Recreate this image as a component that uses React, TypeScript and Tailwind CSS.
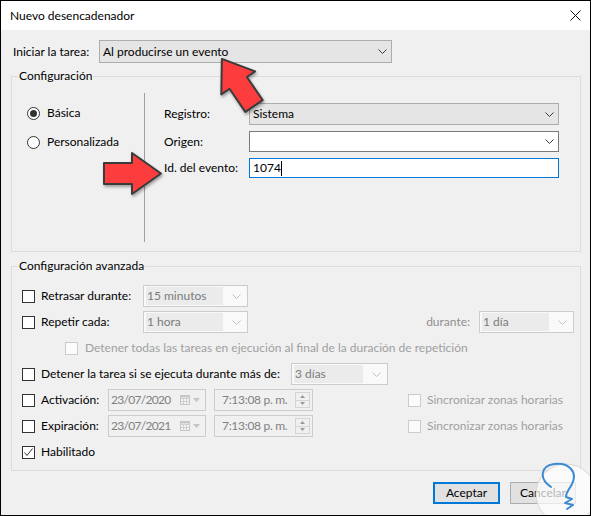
import React from "react";

function Chevron({ color = "#3c3c3c" }: { color?: string }) {
  return (
    <svg width="9" height="5" viewBox="0 0 9 5" className="shrink-0">
      <path d="M0.5 0.5 L4.5 4.5 L8.5 0.5" fill="none" stroke={color} strokeWidth="1" />
    </svg>
  );
}

function Check({ checked = false, disabled = false }: { checked?: boolean; disabled?: boolean }) {
  return (
    <span
      className={
        disabled
          ? "w-[13px] h-[13px] shrink-0 border border-[#cccccc] bg-[#fbfbfb] flex items-center justify-center"
          : "w-[13px] h-[13px] shrink-0 border border-[#333333] bg-white flex items-center justify-center"
      }
    >
      {checked && (
        <svg width="11" height="11" viewBox="0 0 11 11">
          <path d="M1.5 5.5 L4 8.5 L9.5 1.5" fill="none" stroke="#333333" strokeWidth="1" />
        </svg>
      )}
    </span>
  );
}

function Radio({ checked = false }: { checked?: boolean }) {
  return (
    <span className="w-[13px] h-[13px] shrink-0 rounded-full border border-[#333333] bg-white flex items-center justify-center">
      {checked && <span className="w-[7px] h-[7px] rounded-full bg-[#333333]" />}
    </span>
  );
}

function DisCombo({ text, className }: { text: string; className: string }) {
  return (
    <div className={"h-[22px] border border-[#cccccc] bg-[#f9f9f9] flex items-center pl-[2px] pr-[6px] shrink-0 " + className}>
      <span className="flex-1 h-[18px] bg-[#ebebeb] text-[#7a7a7a] leading-[18px] pl-[1px] whitespace-nowrap overflow-hidden">
        {text}
      </span>
      <span className="w-[14px] flex justify-end ml-[4px]">
        <Chevron color="#c2c2c2" />
      </span>
    </div>
  );
}

function DatePick({ text }: { text: string }) {
  return (
    <div className="w-[98px] h-[22px] border border-[#cccccc] flex items-center pl-[2px] pr-[5px] text-[#808080] shrink-0">
      <span className="flex-1 whitespace-nowrap tracking-[-0.7px]">{text}</span>
      <svg width="10" height="10" viewBox="0 0 10 10" className="shrink-0">
        <rect x="0.5" y="0.5" width="9" height="9" fill="#f4f4f4" stroke="#c4c4c4" />
        <path d="M0.5 3.5 H9.5 M0.5 6.5 H9.5 M3.5 3 V9.5 M6.5 3 V9.5" stroke="#d0d0d0" strokeWidth="1" />
        <rect x="0.5" y="0.5" width="9" height="2" fill="#c8c8c8" />
      </svg>
      <svg width="7" height="4" viewBox="0 0 7 4" className="shrink-0 ml-[3px]">
        <path d="M0 0 H7 L3.5 4 Z" fill="#c4c4c4" />
      </svg>
    </div>
  );
}

function TimePick() {
  return (
    <div className="w-[99px] h-[22px] border border-[#cccccc] flex items-center pl-[7px] pr-[2px] text-[#808080] shrink-0">
      <span className="flex-1 whitespace-nowrap tracking-[-0.3px]">7:13:08 p. m.</span>
      <div className="flex flex-col w-[15px] h-[16px]">
        <span className="flex-1 border border-[#d4d4d4] flex items-center justify-center">
          <svg width="5" height="3" viewBox="0 0 5 3">
            <path d="M0 3 H5 L2.5 0 Z" fill="#9a9a9a" />
          </svg>
        </span>
        <span className="flex-1 border border-t-0 border-[#d4d4d4] flex items-center justify-center">
          <svg width="5" height="3" viewBox="0 0 5 3">
            <path d="M0 0 H5 L2.5 3 Z" fill="#9a9a9a" />
          </svg>
        </span>
      </div>
    </div>
  );
}

function Arrow({ x, y, angle }: { x: number; y: number; angle: number }) {
  return (
    <g transform={`translate(${x} ${y}) rotate(${angle})`}>
      <polygon
        points="0,-10.5 28,-10.5 28,-20.5 57,0 28,20.5 28,10.5 0,10.5"
        fill="#fd3d3d"
        stroke="#3a3a3a"
        strokeWidth="2"
        strokeLinejoin="round"
      />
    </g>
  );
}

export default function App() {
  return (
    <div className="relative w-[591px] h-[516px] border border-black bg-[#f0f0f0] overflow-hidden text-[12px] leading-[16px] text-black font-['Segoe_UI','Lato',sans-serif]">
      {/* Title bar */}
      <div className="h-[29px] bg-white flex items-center justify-between pl-[9px] pr-[9px]">
        <span className="whitespace-nowrap">Nuevo desencadenador</span>
        <svg width="11" height="11" viewBox="0 0 11 11">
          <path d="M0.5 0.5 L10.5 10.5 M10.5 0.5 L0.5 10.5" stroke="#111111" strokeWidth="1" />
        </svg>
      </div>

      {/* Iniciar la tarea */}
      <div className="flex items-center mt-[10px] pl-[12px] h-[23px]">
        <span className="w-[86px] shrink-0 whitespace-nowrap">Iniciar la tarea:</span>
        <div className="w-[293px] h-[23px] border border-[#adadad] bg-[#e5e5e5] flex items-center justify-between pl-[3px] pr-[4px]">
          <span className="whitespace-nowrap">Al producirse un evento</span>
          <Chevron />
        </div>
      </div>

      {/* Configuración */}
      <fieldset className="ml-[10px] mt-[6px] w-[570px] h-[183px] border border-[#dcdcdc] p-0 m-0 min-w-0">
        <legend className="ml-[6px] px-[1px] leading-[14px]">Configuración</legend>
        <div className="flex mt-[10px]">
          <div className="w-[132px] shrink-0 flex flex-col pl-[15px] pt-[12px] gap-[13px]">
            <div className="h-[16px] flex items-center gap-[7px]">
              <Radio checked />
              <span>Básica</span>
            </div>
            <div className="h-[16px] flex items-center gap-[7px]">
              <Radio />
              <span>Personalizada</span>
            </div>
          </div>
          <div className="w-[1px] h-[149px] bg-[#a0a0a0] shrink-0" />
          <div className="flex flex-col pl-[19px] pt-[10px]">
            <div className="flex items-center h-[22px]">
              <span className="w-[85px] shrink-0 whitespace-nowrap">Registro:</span>
              <div className="w-[310px] h-[22px] border border-[#adadad] bg-[#e5e5e5] flex items-center justify-between pl-[3px] pr-[4px]">
                <span>Sistema</span>
                <Chevron />
              </div>
            </div>
            <div className="flex items-center h-[21px] mt-[6px]">
              <span className="w-[85px] shrink-0 whitespace-nowrap">Origen:</span>
              <div className="w-[310px] h-[21px] border border-[#7a7a7a] bg-white flex items-center justify-end pr-[4px]">
                <Chevron />
              </div>
            </div>
            <div className="flex items-center h-[20px] mt-[6px]">
              <span className="w-[85px] shrink-0 whitespace-nowrap">Id. del evento:</span>
              <div className="w-[310px] h-[20px] border border-[#0078d7] bg-white flex items-center pl-[3px]">
                <span>1074</span>
                <span className="w-[1px] h-[15px] bg-black" />
              </div>
            </div>
          </div>
        </div>
      </fieldset>

      {/* Configuración avanzada */}
      <fieldset className="ml-[10px] mt-[7px] w-[570px] h-[212px] border border-[#dcdcdc] p-0 m-0 min-w-0">
        <legend className="ml-[6px] px-[1px] leading-[14px]">Configuración avanzada</legend>
        <div className="flex flex-col pt-[12px] gap-[4px]">
          {/* Retrasar */}
          <div className="flex items-center h-[22px] pl-[10px]">
            <Check />
            <span className="ml-[6px] w-[102px] shrink-0 whitespace-nowrap">Retrasar durante:</span>
            <DisCombo text="15 minutos" className="w-[105px]" />
          </div>
          {/* Repetir */}
          <div className="flex items-center h-[22px] pl-[10px] pr-[6px]">
            <Check />
            <span className="ml-[6px] w-[102px] shrink-0 whitespace-nowrap">Repetir cada:</span>
            <DisCombo text="1 hora" className="w-[105px]" />
            <span className="ml-auto mr-[9px] text-[#8f8f8f] whitespace-nowrap">durante:</span>
            <DisCombo text="1 día" className="w-[95px]" />
          </div>
          {/* Detener todas */}
          <div className="flex items-center h-[22px] pl-[53px]">
            <Check disabled />
            <span className="ml-[7px] text-[#a0a0a0] whitespace-nowrap">
              Detener todas las tareas en ejecución al final de la duración de repetición
            </span>
          </div>
          {/* Detener la tarea */}
          <div className="flex items-center h-[22px] pl-[10px]">
            <Check />
            <span className="ml-[6px] w-[250px] shrink-0 whitespace-nowrap">
              Detener la tarea si se ejecuta durante más de:
            </span>
            <DisCombo text="3 días" className="w-[97px]" />
          </div>
          {/* Activación */}
          <div className="flex items-center h-[22px] pl-[10px]">
            <Check />
            <span className="ml-[6px] w-[67px] shrink-0 whitespace-nowrap">Activación:</span>
            <DatePick text="23/07/2020" />
            <span className="ml-[8px]" />
            <TimePick />
            <span className="ml-[95px]" />
            <Check disabled />
            <span className="ml-[6px] text-[#a0a0a0] whitespace-nowrap">Sincronizar zonas horarias</span>
          </div>
          {/* Expiración */}
          <div className="flex items-center h-[22px] pl-[10px]">
            <Check />
            <span className="ml-[6px] w-[67px] shrink-0 whitespace-nowrap">Expiración:</span>
            <DatePick text="23/07/2021" />
            <span className="ml-[8px]" />
            <TimePick />
            <span className="ml-[95px]" />
            <Check disabled />
            <span className="ml-[6px] text-[#a0a0a0] whitespace-nowrap">Sincronizar zonas horarias</span>
          </div>
          {/* Habilitado */}
          <div className="flex items-center h-[22px] pl-[10px]">
            <Check checked />
            <span className="ml-[6px] whitespace-nowrap">Habilitado</span>
          </div>
        </div>
      </fieldset>

      {/* Buttons */}
      <div className="flex justify-end gap-[10px] mt-[11px] pr-[14px]">
        <button className="w-[67px] h-[22px] border-2 border-[#0078d7] bg-[#e1e1e1] flex items-center justify-center">
          Aceptar
        </button>
        <button className="w-[66px] h-[22px] border border-[#adadad] bg-[#e1e1e1] flex items-center justify-center">
          Cancelar
        </button>
      </div>

      {/* Overlay: arrows and watermark */}
      <svg
        className="absolute left-[-1px] top-[-1px] pointer-events-none"
        width="591"
        height="516"
        viewBox="0 0 591 516"
      >
        <defs>
          <filter id="sh" x="-30%" y="-30%" width="160%" height="160%">
            <feDropShadow dx="1" dy="2" stdDeviation="1.5" floodColor="#000000" floodOpacity="0.35" />
          </filter>
        </defs>
        <g filter="url(#sh)">
          <Arrow x={254} y={106} angle={-124.3} />
          <Arrow x={104} y={173.5} angle={0} />
        </g>
        <circle cx="566" cy="494" r="30" fill="#ffffff" fillOpacity="0.7" stroke="#d6d6d6" strokeWidth="1" />
        <path
          d="M551 487 C539 479 540 466 554 464 C569 462 578 472 572 484 C569 490 566 492 566 497 L572 499 L565 503 L573 505 L567 509"
          fill="none"
          stroke="#3d8ad3"
          strokeWidth="2"
          strokeLinecap="round"
          strokeLinejoin="round"
        />
      </svg>
    </div>
  );
}
